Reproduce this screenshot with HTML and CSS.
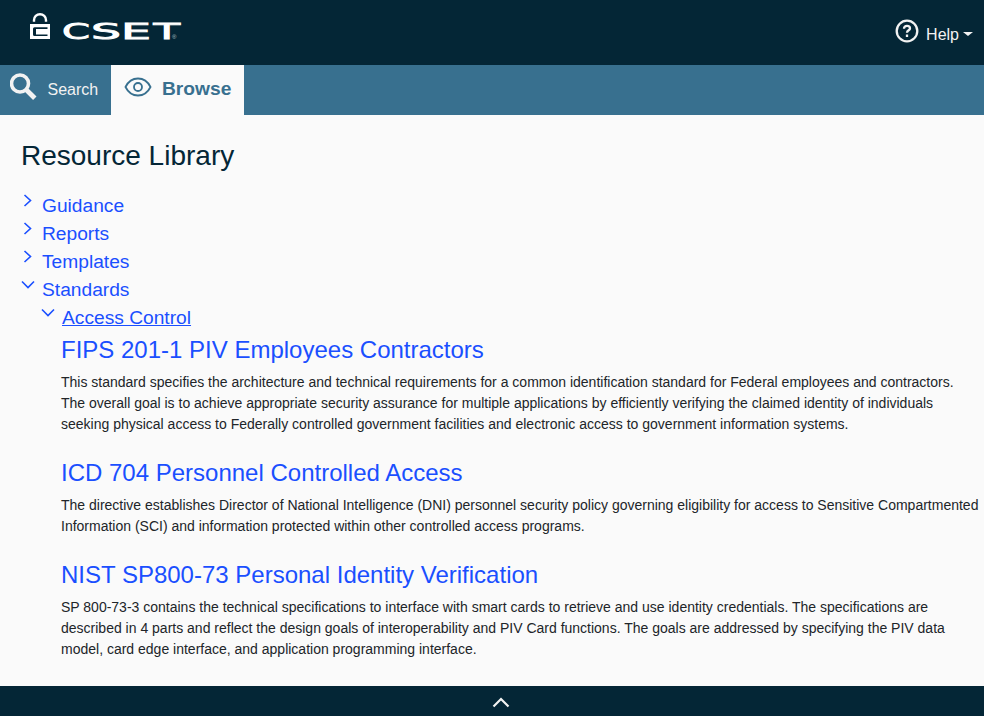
FILE: index.html
```html
<!DOCTYPE html>
<html lang="en">
<head>
<meta charset="utf-8">
<title>CSET Resource Library</title>
<link rel="stylesheet" href="styles.css">
</head>
<body>
<header class="topbar">
  <svg class="logo" width="156" height="40" viewBox="0 0 156 40" aria-label="CSET">
    <path class="shackle" d="M5 11.700V10a6 5.800 0 0 1 12 0v1.700"/>
    <path class="lock" fill-rule="evenodd" d="M1 14h20v15H1zM5.500 17.200H18.500v1.800H7v5.500h11.500v1.500H5.500q-1.500 0-1.500-1.500v-5.800q0-1.500 1.500-1.500z"/>
    <text class="wordmark" y="28.700"><tspan x="33" textLength="28" lengthAdjust="spacingAndGlyphs">C</tspan><tspan x="62" textLength="30" lengthAdjust="spacingAndGlyphs">S</tspan><tspan x="92" textLength="30" lengthAdjust="spacingAndGlyphs">E</tspan><tspan x="124.500" textLength="26.500" lengthAdjust="spacingAndGlyphs">T</tspan></text>
    <text class="registered" x="143" y="28.500">®</text>
  </svg>
  <a class="help">
    <svg class="help-icon" width="24" height="24" viewBox="0 0 24 24"><circle cx="12" cy="12" r="10.300"/><path d="M9 9.700C9 7.600 10.200 6.900 12 6.900s3 1 3 2.500c0 1.800-3 2-3 4.300"/><path d="M12 15.500v2.500"/></svg>
    <span class="help-label">Help</span><span class="caret"></span>
  </a>
</header>
<nav class="tabs">
  <a class="tab search">
    <svg width="28" height="28" viewBox="0 0 28 28"><circle cx="10" cy="10.500" r="8.500"/><path class="handle" d="M16 16.500l8.800 8.800"/></svg>
    <span>Search</span>
  </a>
  <a class="tab browse">
    <svg width="28" height="20" viewBox="0 0 28 20"><path d="M1.500 10C4 5 8.500 1.500 14 1.500S24 5 26.500 10C24 15 19.500 18.500 14 18.500S4 15 1.500 10z"/><circle cx="14" cy="10" r="4"/></svg>
    <span>Browse</span>
  </a>
</nav>
<main>
  <h1>Resource Library</h1>
  <ul class="tree">
    <li><svg class="chevron" viewBox="0 0 14 14"><path d="M3.500 1l6 5.500-6 5.500"/></svg><a>Guidance</a></li>
    <li><svg class="chevron" viewBox="0 0 14 14"><path d="M3.500 1l6 5.500-6 5.500"/></svg><a>Reports</a></li>
    <li><svg class="chevron" viewBox="0 0 14 14"><path d="M3.500 1l6 5.500-6 5.500"/></svg><a>Templates</a></li>
    <li><svg class="chevron" viewBox="0 0 14 14"><path d="M1 3.500l6 6 6-6"/></svg><a>Standards</a></li>
    <li class="child"><svg class="chevron" viewBox="0 0 14 14"><path d="M1 3.500l6 6 6-6"/></svg><a class="current">Access Control</a></li>
  </ul>
  <section class="documents">
    <article>
      <h2>FIPS 201-1 PIV Employees Contractors</h2>
      <p>This standard specifies the architecture and technical requirements for a common identification standard for Federal employees and contractors.<br>The overall goal is to achieve appropriate security assurance for multiple applications by efficiently verifying the claimed identity of individuals<br>seeking physical access to Federally controlled government facilities and electronic access to government information systems.</p>
    </article>
    <article>
      <h2>ICD 704 Personnel Controlled Access</h2>
      <p>The directive establishes Director of National Intelligence (DNI) personnel security policy governing eligibility for access to Sensitive Compartmented<br>Information (SCI) and information protected within other controlled access programs.</p>
    </article>
    <article>
      <h2>NIST SP800-73 Personal Identity Verification</h2>
      <p>SP 800-73-3 contains the technical specifications to interface with smart cards to retrieve and use identity credentials. The specifications are<br>described in 4 parts and reflect the design goals of interoperability and PIV Card functions. The goals are addressed by specifying the PIV data<br>model, card edge interface, and application programming interface.</p>
    </article>
  </section>
</main>
<footer><svg width="18" height="12" viewBox="0 0 18 12"><path d="M1.500 9.500L9 2l7.500 7.500"/></svg></footer>
</body>
</html>
```
FILE: styles.css
```css
* { box-sizing: border-box; }
body { margin: 0; height: 716px; overflow: hidden; display: flex; flex-direction: column; background: #fafafa; color: #212529; font-family: "Liberation Sans", Arial, sans-serif; }
svg { display: block; flex: none; fill: none; }
.topbar { height: 65px; flex: none; display: flex; justify-content: space-between; background: #042636; color: #f2f2f2; padding: 10px 12px 0 29px; }
.logo { overflow: visible; }
.shackle { stroke: #fff; stroke-width: 2.400; }
.lock { fill: #fff; }
.wordmark { fill: #fff; stroke: #fff; stroke-width: .8; font: 21.500px "DejaVu Sans", sans-serif; }
.registered { fill: #b6c1c6; font: 6px "Liberation Sans", sans-serif; }
.help { display: flex; align-items: flex-start; padding-top: 9px; font-size: 16px; }
.help-icon { stroke: #f2f2f2; stroke-width: 2.300; }
.help-label { margin: 6px 0 0 7px; line-height: 20px; }
.caret { margin: 13px 0 0 4px; border: solid transparent; border-width: 4px 5px 0; border-top-color: #f2f2f2; margin-right: -1px; }
.tabs { height: 50px; flex: none; display: flex; background: #38708f; }
.tab { display: flex; align-items: flex-start; }
.search { width: 111px; padding: 8px 0 0 10px; color: #f2f2f2; font-size: 16px; }
.search svg { stroke: #f2f2f2; stroke-width: 3.600; }
.search .handle { stroke-width: 4.800; }
.search span { margin: 7px 0 0 9.500px; line-height: 20px; }
.browse { width: 133px; padding: 12px 0 0 13px; background: #fafafa; color: #38708f; font-size: 19.200px; font-weight: bold; }
.browse svg { stroke: #38708f; stroke-width: 1.800; }
.browse span { margin: 1px 0 0 10px; line-height: 22px; }
main { flex: 1; min-height: 0; padding: 24px 0 0 21px; }
h1 { margin: 0; font-size: 28px; font-weight: normal; line-height: 34px; color: #042636; }
.tree { list-style: none; margin: 18px 0 0; padding: 0; color: #1a4fff; font-size: 19.200px; }
.tree li { display: flex; height: 28px; line-height: 30px; }
.tree .child { padding-left: 20px; }
.chevron { width: 14px; height: 14px; margin: 3px 7px 0 0; stroke: #1a4fff; stroke-width: 1.600; }
.current { text-decoration: underline; }
.documents { padding-left: 40px; white-space: nowrap; }
article { margin-bottom: 19px; }
h2 { margin: 0; font-size: 24px; font-weight: normal; line-height: 37px; color: #1a4fff; }
p { margin: 0; padding-top: 4px; font-size: 14px; line-height: 21px; }
footer { height: 30px; flex: none; display: flex; justify-content: center; padding: 11px 0 0 18px; background: #042636; }
footer svg { stroke: #f2f2f2; stroke-width: 2.200; }
```
